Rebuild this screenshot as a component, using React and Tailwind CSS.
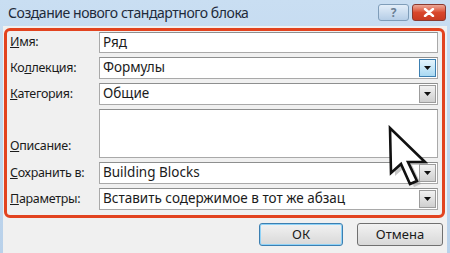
import React from "react";

const font = { fontFamily: '"Noto Sans", "Open Sans", "DejaVu Sans", sans-serif' };

function Arrow() {
  return (
    <svg width="7" height="4" viewBox="0 0 7 4">
      <path d="M0 0 H7 L3.5 4 Z" fill="#111" />
    </svg>
  );
}

function Field({ value, h = "h-[22px]", combo, active }) {
  return (
    <div
      className={`flex-1 ${h} bg-white border border-[#a9a9a9] border-t-[#8e8f8f] flex items-stretch`}
    >
      <div className="flex-1 flex items-center px-[3px] text-[13.5px] text-[#1b1b1b] leading-none">
        {value}
      </div>
      {combo && (
        <div
          className={`w-[17px] m-[1px] flex items-center justify-center border ${
            active
              ? "border-[#3c7fb1] bg-gradient-to-b from-[#e5f4fc] to-[#a9d9f2]"
              : "border-[#9c9c9c] bg-gradient-to-b from-[#f2f2f2] to-[#cfcfcf]"
          }`}
        >
          <Arrow />
        </div>
      )}
    </div>
  );
}

function Row({ label, children, alignEnd }) {
  return (
    <div className={`flex ${alignEnd ? "items-end" : "items-center"}`}>
      <div
        className={`w-[92px] pl-[3px] text-[12.5px] tracking-[-0.3px] text-[#1b1b1b] leading-none ${
          alignEnd ? "pb-[6px]" : ""
        }`}
      >
        {label}
      </div>
      {children}
    </div>
  );
}

function Cursor() {
  const pts = "5,3 6,48 16,39 25,59 32,56 23,37 40,37";
  return (
    <svg
      className="absolute left-[385px] top-[125px]"
      width="52"
      height="68"
      viewBox="0 0 52 68"
    >
      <polygon points={pts} transform="translate(4,3)" fill="#9a9a9a" opacity="0.55" />
      <polygon
        points={pts}
        fill="#fff"
        stroke="#111"
        strokeWidth="2.6"
        strokeLinejoin="miter"
      />
    </svg>
  );
}

export default function App() {
  return (
    <div
      className="relative w-[450px] h-[253px] overflow-hidden bg-gradient-to-b from-[#c9def2] to-[#b9d1ea] flex flex-col"
      style={font}
    >
      {/* title bar */}
      <div className="h-[26px] flex items-center justify-between pl-[8px] pr-[4px]">
        <div className="text-[14px] tracking-[-0.45px] text-[#1e2a3a] leading-none">
          Создание нового стандартного блока
        </div>
        <div className="flex gap-[3px] self-start mt-[4px]">
          <div className="w-[31px] h-[17px] rounded-[3px] border border-[#7f9db9] bg-gradient-to-b from-[#e3eef9] to-[#b5cde6] flex items-center justify-center text-[12px] font-bold text-[#6b7f93] leading-none">
            ?
          </div>
          <div className="w-[34px] h-[17px] rounded-[3px] border border-[#8a3a30] bg-gradient-to-b from-[#eba898] via-[#d9472c] to-[#c83a22] flex items-center justify-center">
            <svg width="12" height="9" viewBox="0 0 12 9">
              <path d="M2 1 L10 8 M10 1 L2 8" stroke="#fff" strokeWidth="2.4" strokeLinecap="round" />
            </svg>
          </div>
        </div>
      </div>

      {/* body */}
      <div className="flex-1 mx-[3px] bg-[#f0f0f0] pt-[2px] flex flex-col">
        <div className="ml-[1px] w-[441px] border-[3px] border-[#e2431f] rounded-[6px] pt-[1px] pb-[5px] pr-[4px] flex flex-col gap-[4px]">
          <Row label={<><span className="underline">И</span>мя:</>}>
            <Field value="Ряд" h="h-[21px]" />
          </Row>
          <Row label={<>Ко<span className="underline">л</span>лекция:</>}>
            <Field value="Формулы" combo active />
          </Row>
          <Row label={<><span className="underline">К</span>атегория:</>}>
            <Field value="Общие" combo />
          </Row>
          <Row alignEnd label={<><span className="underline">О</span>писание:</>}>
            <Field value="" h="h-[49px]" />
          </Row>
          <Row label={<><span className="underline">С</span>охранить в:</>}>
            <Field value="Building Blocks" combo />
          </Row>
          <Row label={<><span className="underline">П</span>араметры:</>}>
            <Field value="Вставить содержимое в тот же абзац" combo />
          </Row>
        </div>

        <div className="flex justify-end gap-[14px] pr-[4px] mt-[5px]">
          <div className="w-[84px] h-[23px] rounded-[3px] border border-[#3c7fb1] shadow-[inset_0_0_0_1px_#8fd2f7] bg-gradient-to-b from-[#f2f2f2] to-[#d8d8d8] flex items-center justify-center text-[13px] text-[#1b1b1b]">
            ОК
          </div>
          <div className="w-[86px] h-[23px] rounded-[3px] border border-[#707070] bg-gradient-to-b from-[#f2f2f2] to-[#d8d8d8] flex items-center justify-center text-[13px] text-[#1b1b1b]">
            Отмена
          </div>
        </div>
      </div>

      <Cursor />
    </div>
  );
}
